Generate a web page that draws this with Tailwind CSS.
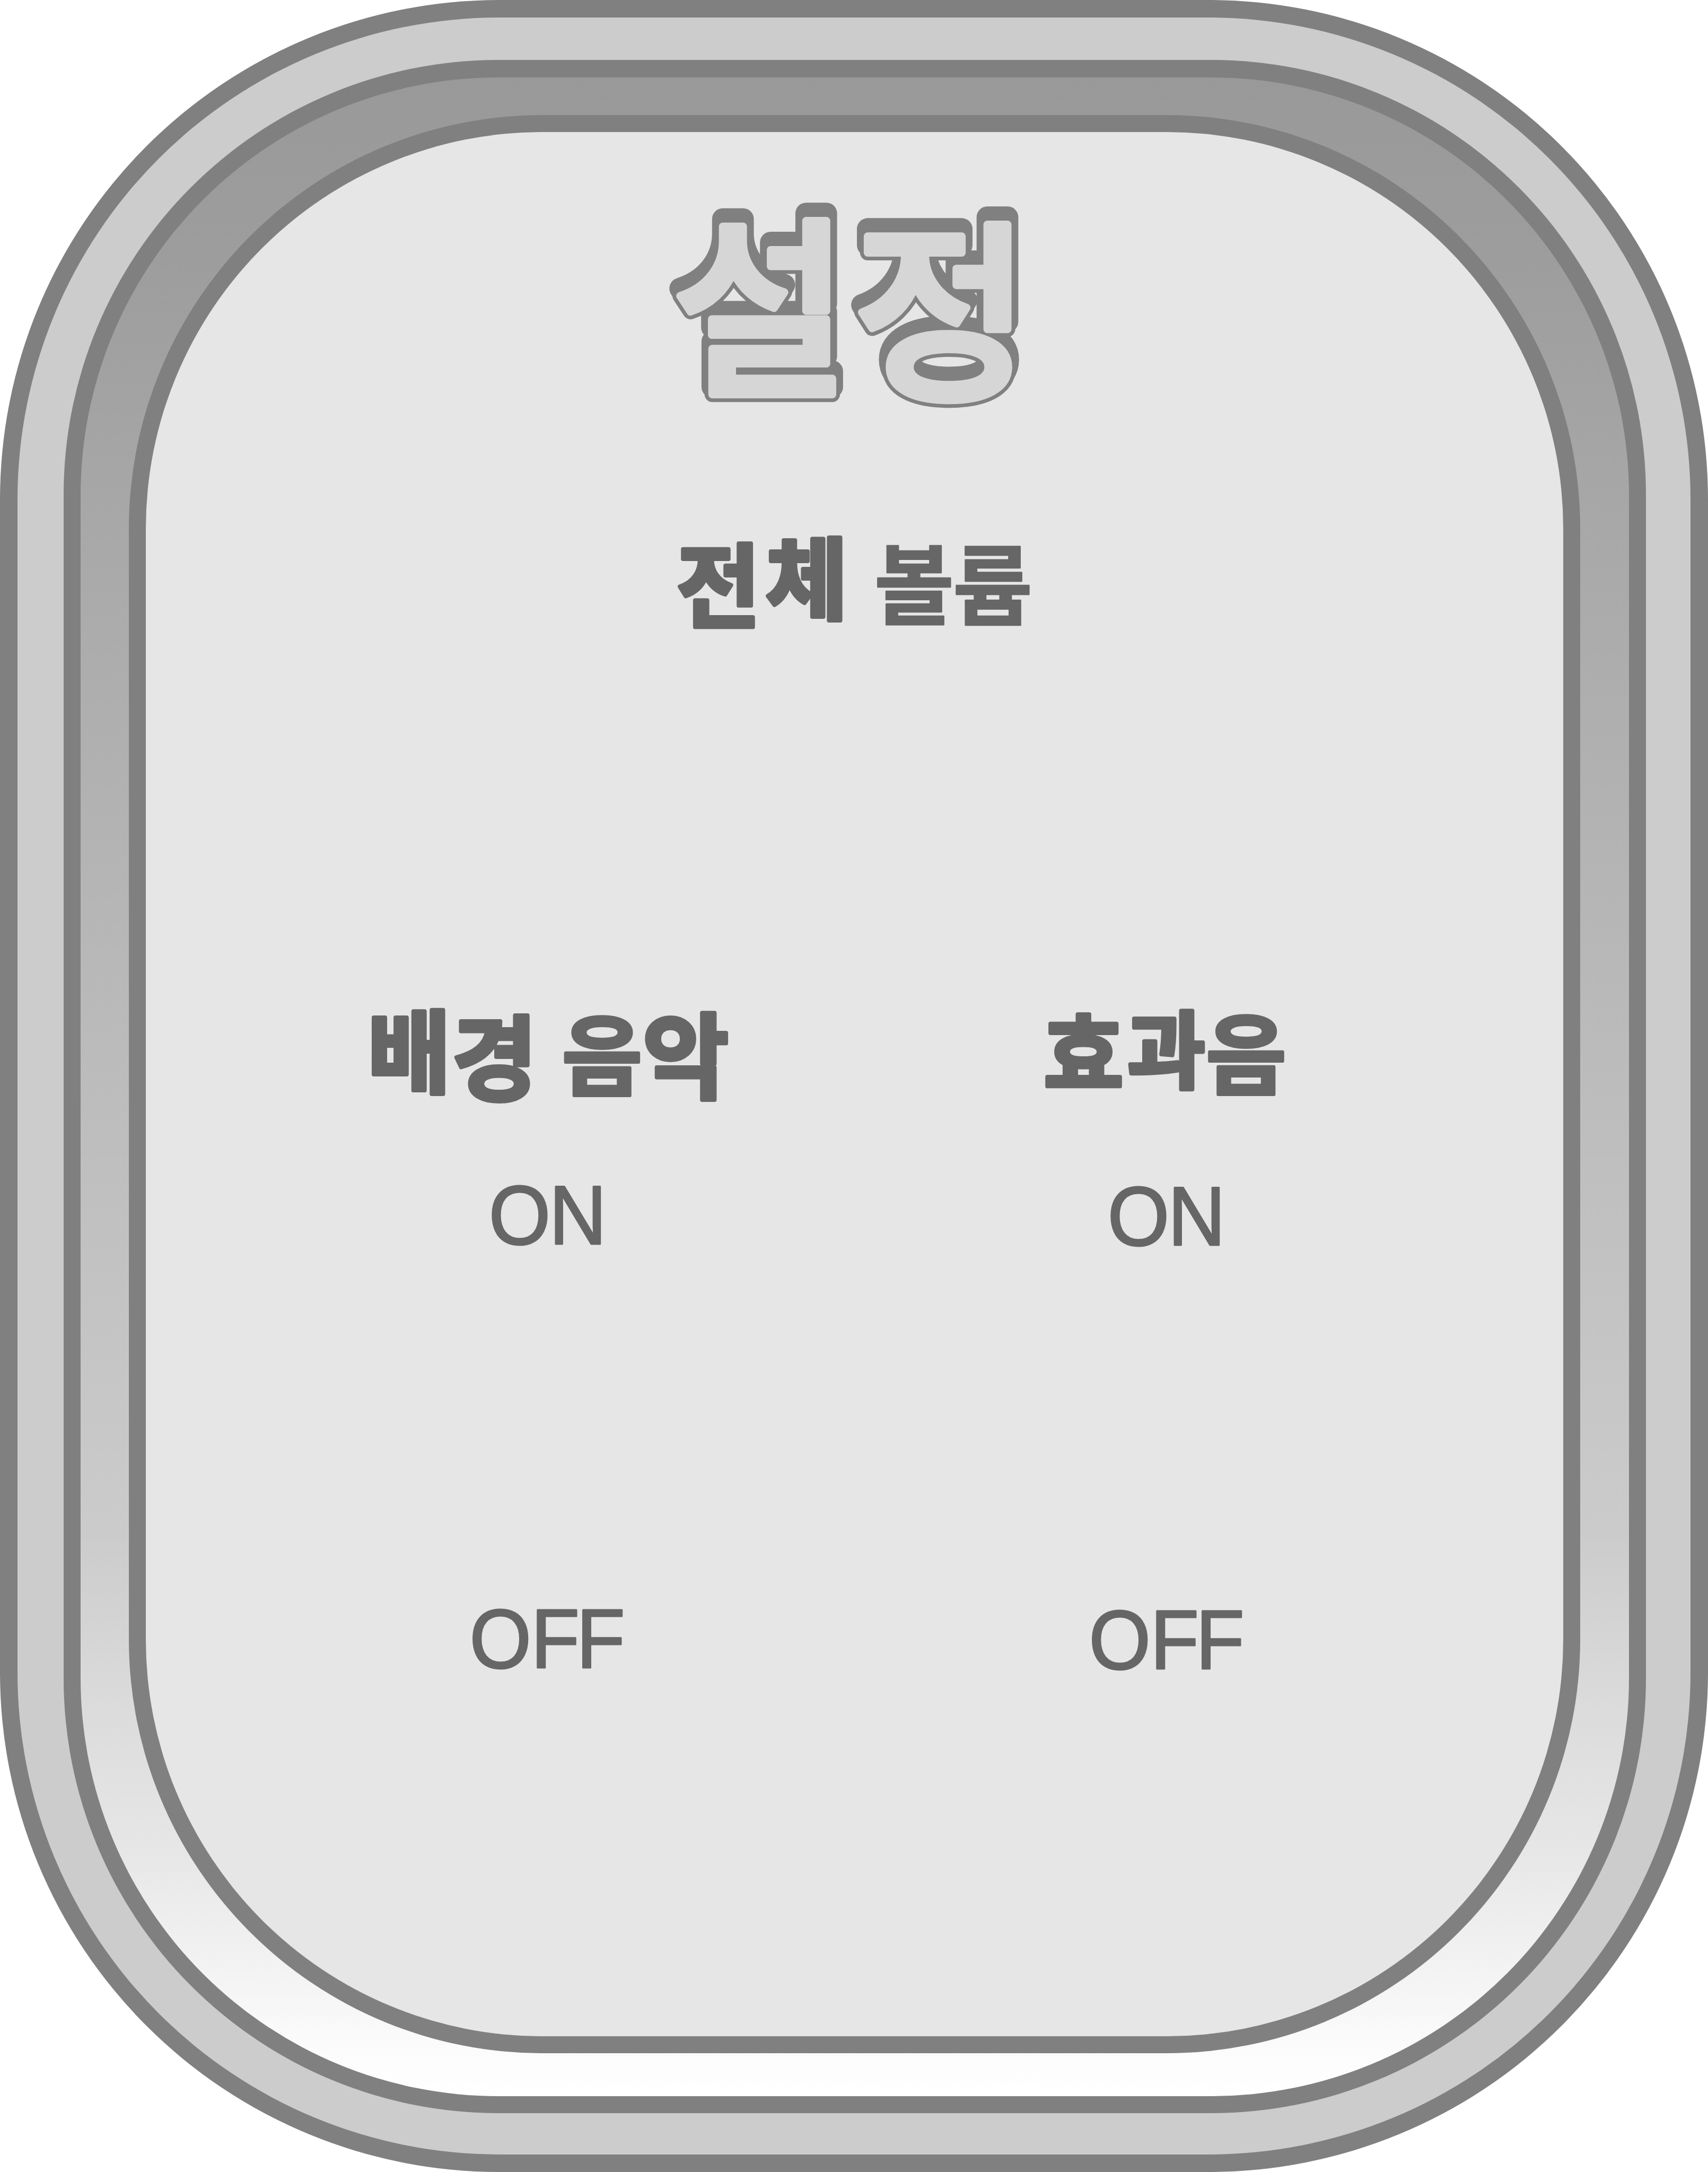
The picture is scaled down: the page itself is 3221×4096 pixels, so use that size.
<!DOCTYPE html>
<html lang="ko">
<head>
<meta charset="utf-8">
<title>설정</title>
<script src="https://cdn.jsdelivr.net/npm/@tailwindcss/browser@4"></script>
</head>
<body class="bg-white">
<!-- outer rim -->
<div class="h-[4096px] w-[3221px] rounded-[942px] bg-[#808080] p-[33px]">
 <div class="h-full w-full rounded-[909px] bg-[#cccccc] pt-[80px] pr-[84px] pb-[78px] pl-[87px]">
  <!-- bevel -->
  <div class="h-full w-full rounded-[820px] bg-[#808080] px-[32px] pt-[33px] pb-[32px]">
   <div class="h-full w-full rounded-[788px] bg-[linear-gradient(180deg,#999999_0%,#9d9d9d_9%,#a7a7a7_21%,#bababa_47%,#cbcbcb_72%,#dadada_80%,#e7e7e7_88%,#fcfcfc_98%,#ffffff_100%)] pt-[71px] pr-[92px] pb-[81px] pl-[91px]">
    <div class="h-full w-full rounded-[780px] bg-[#808080] p-[32px]">
     <!-- panel -->
     <main class="flex h-full w-full flex-col items-start rounded-[748px] bg-[#e6e6e6] font-['Noto_Sans_CJK_KR',sans-serif] font-bold">

      <svg class="mt-[128px] ml-[985px] h-[398px] w-[671px] shrink-0 overflow-visible font-medium" viewBox="0 0 860 510" stroke-linejoin="round">
       <use href="#title" y="-18" fill="#808080" stroke="#808080" stroke-width="52"/>
       <use href="#title" fill="#808080" stroke="#808080" stroke-width="37"/>
       <g fill="#d6d6d6" stroke="#d6d6d6" stroke-width="19">
        <text id="title" font-size="465" x="9 447" y="437 446">설정</text>
       </g>
      </svg>

      <svg class="mt-[236px] ml-[1001px] h-[176px] w-[666px] shrink-0 overflow-visible" viewBox="0 0 854 226" fill="#666666" stroke="#666666" stroke-width="10" stroke-linejoin="round">
       <text><tspan x="-1" y="202.5" font-size="221">전</tspan><tspan x="215" y="185" font-size="216">체</tspan> <tspan x="478.2" y="197" font-size="210" stroke-width="3">볼</tspan><tspan x="668.2" y="198" font-size="210" stroke-width="3">륨</tspan></text>
      </svg>

      <div class="mt-[716px] ml-[420px] flex items-start gap-[600px]">
       <section class="flex w-[680px] flex-col items-center">
        <svg class="h-[178px] w-[680px] overflow-visible" viewBox="0 0 872 228" fill="#666666" stroke="#666666" stroke-width="10" stroke-linejoin="round">
         <text><tspan x="-2" y="186" font-size="218">배</tspan><tspan x="201.5" y="203.6" font-size="224">경</tspan> <tspan x="468.3" y="190.5" font-size="210" stroke-width="8">음</tspan><tspan x="663" y="198.4" font-size="226">악</tspan></text>
        </svg>
        <svg class="mt-[154px] mr-[9px] h-[114px] w-[207px] overflow-visible font-['Liberation_Sans',sans-serif] font-normal" viewBox="0 0 265 146" fill="#666666" stroke="#666666" stroke-width="4" stroke-linejoin="round">
         <text transform="scale(0.95 1)" font-size="202" x="-7.2 146.7" y="142.4">ON</text>
        </svg>
        <svg class="mt-[685px] mr-[6px] h-[114px] w-[282px] overflow-visible font-['Liberation_Sans',sans-serif] font-normal" viewBox="0 0 361 146" fill="#666666" stroke="#666666" stroke-width="4" stroke-linejoin="round">
         <text transform="scale(0.95 1)" font-size="202" x="-7.4 148.8 264.4" y="142.4">OFF</text>
        </svg>
       </section>

       <section class="-mt-[3px] flex w-[444px] flex-col items-center">
        <svg class="h-[174px] w-[444px] overflow-visible" viewBox="0 0 569 223" fill="#666666" stroke="#666666" stroke-width="10" stroke-linejoin="round">
         <text><tspan x="-8.4" y="189.8" font-size="209">효</tspan><tspan x="194" y="180" font-size="204">과</tspan><tspan x="384.3" y="192" font-size="210" stroke-width="8">음</tspan></text>
        </svg>
        <svg class="mt-[163px] h-[114px] w-[207px] overflow-visible font-['Liberation_Sans',sans-serif] font-normal" viewBox="0 0 265 146" fill="#666666" stroke="#666666" stroke-width="4" stroke-linejoin="round">
         <text transform="scale(0.95 1)" font-size="202" x="-7.2 146.7" y="142.4">ON</text>
        </svg>
        <svg class="mt-[685px] ml-[6px] h-[114px] w-[282px] overflow-visible font-['Liberation_Sans',sans-serif] font-normal" viewBox="0 0 361 146" fill="#666666" stroke="#666666" stroke-width="4" stroke-linejoin="round">
         <text transform="scale(0.95 1)" font-size="202" x="-7.4 148.8 264.4" y="142.4">OFF</text>
        </svg>
       </section>
      </div>

     </main>
    </div>
   </div>
  </div>
 </div>
</div>
</body>
</html>
